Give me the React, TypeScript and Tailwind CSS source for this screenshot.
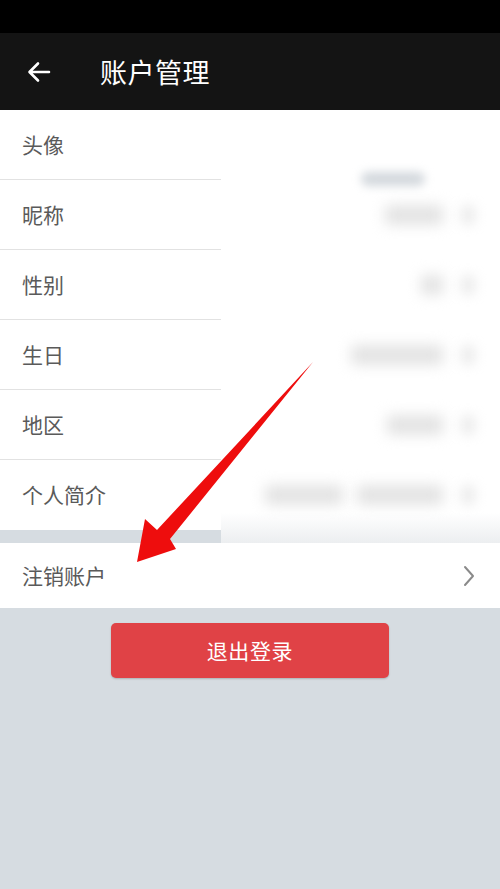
const ROWS = ["头像", "昵称", "性别", "生日", "地区", "个人简介"];

// widths of the blurred value placeholders on the right side (one per row)
const VALUES: number[][] = [[], [58], [22], [92], [56], [78, 86]];

const cjk = { fontFamily: '"Noto Sans CJK SC", "Noto Sans", sans-serif' };

const Chevron = () => (
  <svg width="14" height="24" viewBox="0 0 14 24" fill="none">
    <path d="M3 3l8 9-8 9" stroke="#8a8a8a" strokeWidth="2" strokeLinecap="round" strokeLinejoin="round" />
  </svg>
);

const App = () => (
  <div className="relative w-[500px] h-[889px] bg-[#d6dce1] overflow-hidden" style={cjk}>
    <div className="h-[33px] bg-black" />
    <header className="h-[77px] bg-[#141414] flex items-center">
      <svg className="ml-[27px]" width="24" height="22" viewBox="0 0 24 22" fill="none">
        <path d="M22 11H3M11 2.5L2.5 11l8.5 8.5" stroke="white" strokeWidth="2.6" strokeLinecap="round" strokeLinejoin="round" />
      </svg>
      <h1 className="ml-[49px] text-white text-[27px] leading-none tracking-[0.02em]">账户管理</h1>
    </header>

    <section className="flex">
      <div className="w-[221px] bg-white">
        {ROWS.map((label, i) => (
          <div
            key={label}
            className={`h-[70px] flex items-center pl-[22px] text-[21px] text-[#5a5a5a] ${i < ROWS.length - 1 ? "border-b border-[#e2e2e2]" : ""}`}
          >
            {label}
          </div>
        ))}
        <div className="h-[13px] bg-[#d6dce1]" />
      </div>
      <div className="flex-1 bg-gradient-to-b from-white from-[93%] to-[#eceef0] overflow-hidden">
        {VALUES.map((blobs, i) => (
          <div key={i} className={`h-[70px] flex justify-end pr-[25px] gap-[18px] ${i === 0 ? "items-end" : "items-center"}`}>
            {i === 0 ? (
              <div className="w-[64px] h-[14px] mr-[50px] -mb-[6px] rounded-full bg-[#d3d8dd] blur-[5px]" />
            ) : (
              <>
                <div className="flex gap-[14px]">
                  {blobs.map((w, j) => (
                    <div key={j} className="h-[20px] rounded bg-[#e3e3e3] blur-[7px]" style={{ width: w }} />
                  ))}
                </div>
                <div className="w-[14px] h-[20px] rounded bg-[#ececec] blur-[6px]" />
              </>
            )}
          </div>
        ))}
        <div className="h-[1px]" />
      </div>
    </section>

    <div className="h-[65px] bg-white flex items-center justify-between pl-[22px] pr-[24px] text-[21px] text-[#5a5a5a]">
      <span>注销账户</span>
      <Chevron />
    </div>

    <div className="flex justify-center pt-[15px]">
      <button className="w-[278px] h-[55px] rounded-[5px] bg-[#e04246] text-white text-[21px] shadow-[0_1px_2px_rgba(0,0,0,0.2)] tracking-[0.03em]">
        退出登录
      </button>
    </div>

    {/* red annotation arrow */}
    <svg className="absolute left-0 top-0 pointer-events-none" width="500" height="889" viewBox="0 0 500 889">
      <polygon points="137,562 145,519 157,530 313,362 170,539 176,549" fill="#ee0d0d" />
    </svg>
  </div>
);

export default App;
